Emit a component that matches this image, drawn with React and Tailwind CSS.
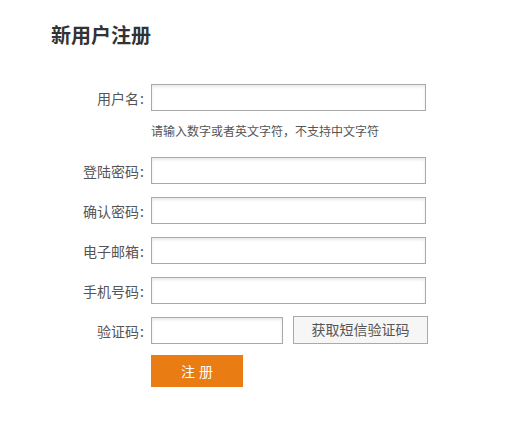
export default function App() {
  const font = { fontFamily: '"Noto Sans CJK SC", "Noto Sans", sans-serif' };
  const inputCls =
    "box-border h-[27px] border border-[#a9a9a9] bg-white shadow-[inset_0_2px_3px_rgba(0,0,0,0.09)] outline-none px-1 text-[14px]";
  const Row = ({ label, children, className = "" }) => (
    <div className={"flex items-center " + className}>
      <label className="w-[93px] text-right text-[14px] leading-[20px] text-[#555]">
        {label}<span className="ml-[1px]">:</span>
      </label>
      <div className="ml-[7px] flex items-center">{children}</div>
    </div>
  );
  return (
    <div className="w-[510px] h-[427px] bg-white pl-[51px] pt-[21px] box-border" style={font}>
      <h1 className="text-[20px] font-bold leading-[28px] text-[#333] m-0">新用户注册</h1>
      <div className="mt-[35px]">
        <Row label="用户名">
          <input className={inputCls + " w-[275px]"} />
        </Row>
        <div className="ml-[100px] mt-[11px] text-[12px] leading-[18px] text-[#555]">
          请输入数字或者英文字符，不支持中文字符
        </div>
        <Row label="登陆密码" className="mt-[17px]">
          <input type="password" className={inputCls + " w-[275px]"} />
        </Row>
        <Row label="确认密码" className="mt-[13px]">
          <input type="password" className={inputCls + " w-[275px]"} />
        </Row>
        <Row label="电子邮箱" className="mt-[13px]">
          <input className={inputCls + " w-[275px]"} />
        </Row>
        <Row label="手机号码" className="mt-[13px]">
          <input className={inputCls + " w-[275px]"} />
        </Row>
        <Row label="验证码" className="mt-[13px]">
          <input className={inputCls + " w-[132px]"} />
          <button className="ml-[10px] box-border h-[28px] w-[135px] border border-[#a9a9a9] bg-[#f6f6f6] text-[14px] text-[#555] -mt-[2px]">
            获取短信验证码
          </button>
        </Row>
        <div className="ml-[100px] mt-[11px]">
          <button className="h-[32px] w-[92px] bg-[#e97c13] text-white text-[14px] tracking-[4px] pl-[4px]">
            注册
          </button>
        </div>
      </div>
    </div>
  );
}
